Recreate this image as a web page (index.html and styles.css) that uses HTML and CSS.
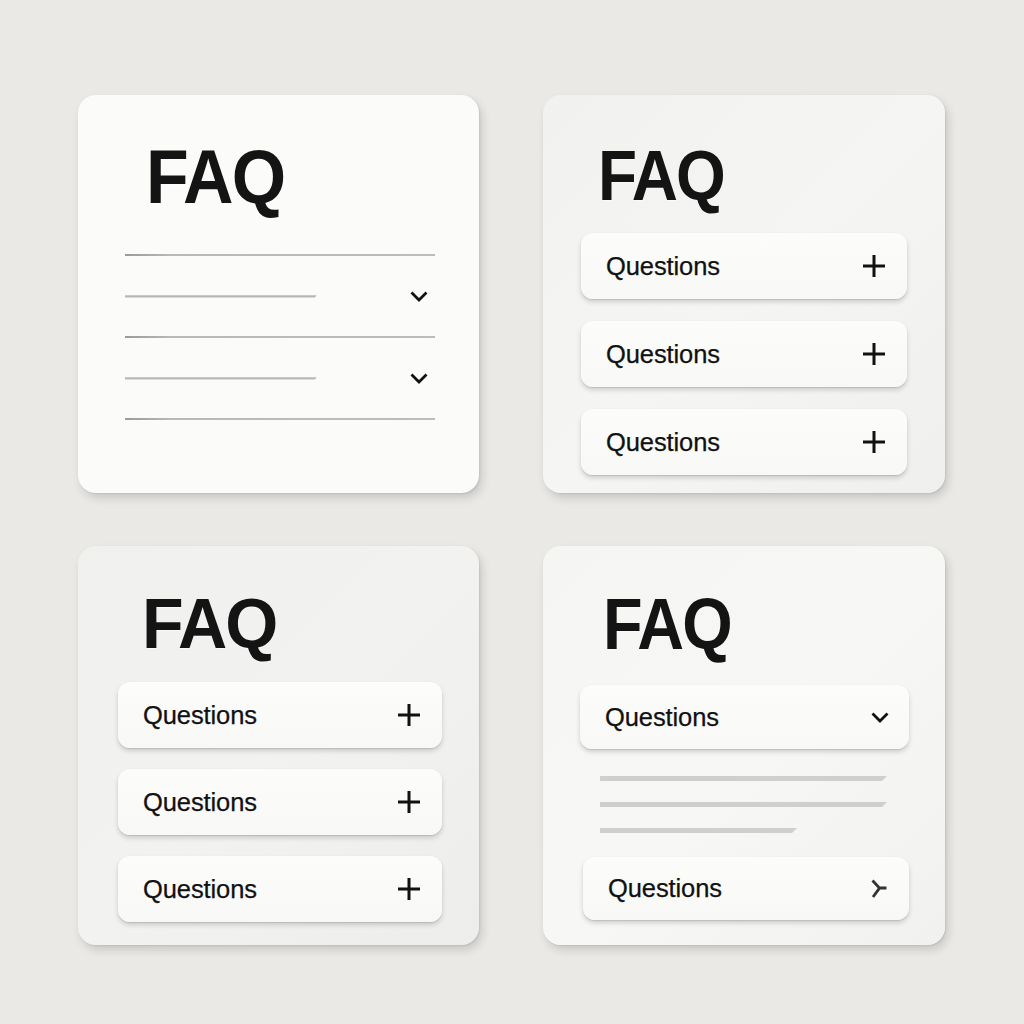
FILE: index.html
```html
<!DOCTYPE html>
<html lang="en">
<head>
<meta charset="utf-8">
<title>FAQ variations</title>
<link rel="stylesheet" href="styles.css">
</head>
<body>
<main class="board">
  <section class="card card-a">
    <h2 class="faq faq-a">FAQ</h2>
    <div class="rule-list">
      <div class="rule"></div>
      <div class="rule-item">
        <div class="rule-short"></div>
        <svg class="chev" width="18" height="11" viewBox="0 0 18 11"><path d="M1.5 1.5 L9 9 L16.5 1.5" fill="none" stroke="#111" stroke-width="2.8"/></svg>
      </div>
      <div class="rule"></div>
      <div class="rule-item">
        <div class="rule-short"></div>
        <svg class="chev" width="18" height="11" viewBox="0 0 18 11"><path d="M1.5 1.5 L9 9 L16.5 1.5" fill="none" stroke="#111" stroke-width="2.8"/></svg>
      </div>
      <div class="rule"></div>
    </div>
  </section>

  <section class="card card-b">
    <h2 class="faq faq-b">FAQ</h2>
    <div class="rows rows-b">
      <div class="row"><span class="q">Questions</span><svg class="plus" width="24" height="24" viewBox="0 0 24 24"><path d="M12 1 V23 M1 12 H23" stroke="#111" stroke-width="3"/></svg></div>
      <div class="row"><span class="q">Questions</span><svg class="plus" width="24" height="24" viewBox="0 0 24 24"><path d="M12 1 V23 M1 12 H23" stroke="#111" stroke-width="3"/></svg></div>
      <div class="row"><span class="q">Questions</span><svg class="plus" width="24" height="24" viewBox="0 0 24 24"><path d="M12 1 V23 M1 12 H23" stroke="#111" stroke-width="3"/></svg></div>
    </div>
  </section>

  <section class="card card-c">
    <h2 class="faq faq-c">FAQ</h2>
    <div class="rows rows-c">
      <div class="row"><span class="q">Questions</span><svg class="plus" width="24" height="24" viewBox="0 0 24 24"><path d="M12 1 V23 M1 12 H23" stroke="#111" stroke-width="3"/></svg></div>
      <div class="row"><span class="q">Questions</span><svg class="plus" width="24" height="24" viewBox="0 0 24 24"><path d="M12 1 V23 M1 12 H23" stroke="#111" stroke-width="3"/></svg></div>
      <div class="row"><span class="q">Questions</span><svg class="plus" width="24" height="24" viewBox="0 0 24 24"><path d="M12 1 V23 M1 12 H23" stroke="#111" stroke-width="3"/></svg></div>
    </div>
  </section>

  <section class="card card-d">
    <h2 class="faq faq-d">FAQ</h2>
    <div class="row row-open"><span class="q">Questions</span><svg class="chev-d" width="18" height="12" viewBox="0 0 18 12"><path d="M1.5 2.5 L9 10 L16.5 2.5" fill="none" stroke="#111" stroke-width="2.8"/></svg></div>
    <div class="answer">
      <div class="aline"></div>
      <div class="aline"></div>
      <div class="aline aline-short"></div>
    </div>
    <div class="row row-closed"><span class="q">Questions</span><svg class="chev-r" width="17" height="20" viewBox="0 0 17 20"><path d="M1.5 1.5 L8.5 9 L2 18 M8.5 9 L15.5 9" fill="none" stroke="#333" stroke-width="2.8"/></svg></div>
  </section>
</main>
</body>
</html>
```

FILE: styles.css
```css
html, body {
  margin: 0;
  padding: 0;
}
body {
  background: #eae9e6;
  width: 1024px;
  height: 1024px;
  overflow: hidden;
  font-family: "Liberation Sans", Arial, sans-serif;
  color: #111;
}
.board {
  display: grid;
  grid-template-columns: 401px 402px;
  grid-template-rows: 398px 399px;
  column-gap: 64px;
  row-gap: 53px;
  padding: 95px 0 0 78px;
}
.card {
  border-radius: 18px;
  box-sizing: border-box;
  display: flex;
  flex-direction: column;
  box-shadow: 3px 5px 10px rgba(0,0,0,0.14), 1px 1px 2px rgba(0,0,0,0.08);
}
.card-a { background: #fbfbfa; }
.card-b { background: linear-gradient(135deg, #f1f1ef 0%, #f5f5f3 50%, #efefed 100%); }
.card-c { background: linear-gradient(135deg, #f0f0ee 0%, #f2f2f0 50%, #ededeb 100%); }
.card-d { background: linear-gradient(135deg, #f5f5f3 0%, #f7f7f5 50%, #f1f1ef 100%); }

.faq {
  margin: 0;
  font-family: "Liberation Sans", Arial, sans-serif;
  font-weight: 700;
  line-height: 1;
  color: #141414;
  letter-spacing: -2px;
  transform-origin: 0 0;
  text-shadow: 0 1px 1px rgba(255,255,255,0.6);
}
.faq-a { font-size: 76px; margin: 44px 0 0 68px; transform: scaleX(0.92); }
.faq-b { font-size: 71px; margin: 45px 0 0 55px; transform: scaleX(0.9); }
.faq-c { font-size: 71px; margin: 42px 0 0 64px; transform: scaleX(0.96); }
.faq-d { font-size: 72px; margin: 42px 0 0 60px; transform: scaleX(0.9); }

/* card A: ruled list */
.rule-list {
  margin: 39px 0 0 47px;
  width: 310px;
  display: flex;
  flex-direction: column;
}
.rule {
  height: 2px;
  background: linear-gradient(90deg, #9a9a98 0%, #b9b9b7 15%, #bcbcba 100%);
}
.rule-item {
  height: 80px;
  display: flex;
  align-items: center;
  justify-content: space-between;
  padding-right: 7px;
}
.rule-short {
  width: 192px;
  height: 3px;
  background: linear-gradient(180deg, #d3d3d1 0%, #b0b0ae 60%, #c8c8c6 100%);
  clip-path: polygon(0 0, 100% 0, calc(100% - 2px) 100%, 0 100%);
}
.chev { display: block; }

/* rows */
.rows {
  display: flex;
  flex-direction: column;
}
.rows-b { margin: 22px 0 0 38px; width: 326px; row-gap: 22px; }
.rows-c { margin: 23px 0 0 40px; width: 324px; row-gap: 21px; }
.row {
  box-sizing: border-box;
  height: 66px;
  border-radius: 12px;
  background: linear-gradient(180deg, #fcfcfb 0%, #f8f8f7 100%);
  box-shadow: 0 3px 5px rgba(0,0,0,0.16), 0 1px 1px rgba(0,0,0,0.10);
  display: flex;
  align-items: center;
  justify-content: space-between;
  padding: 0 21px 0 25px;
}
.q {
  font-size: 25.5px;
  color: #111;
  letter-spacing: -0.1px;
  -webkit-text-stroke: 0.25px #111;
}
.plus { display: block; }

/* card D */
.row-open {
  margin: 25px 0 0 37px;
  width: 329px;
  height: 64px;
  padding: 0 20px 0 25px;
}
.answer {
  margin: 27px 0 0 57px;
  display: flex;
  flex-direction: column;
  row-gap: 21px;
}
.aline {
  width: 287px;
  height: 5px;
  background: #cfcfcd;
  clip-path: polygon(0 0, 100% 0, calc(100% - 5px) 100%, 0 100%);
}
.aline-short { width: 197px; }
.row-closed {
  margin: 24px 0 0 40px;
  width: 326px;
  height: 63px;
  padding: 0 21px 0 25px;
}
.chev-r { display: block; }
.chev-d { display: block; }
```
